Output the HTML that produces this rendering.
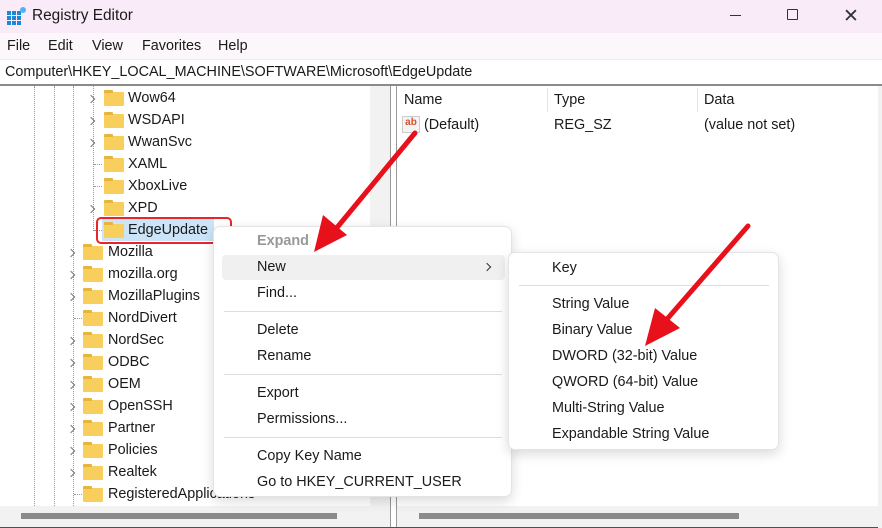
<!DOCTYPE html>
<html><head><style>
*{margin:0;padding:0;box-sizing:border-box}
body{width:882px;height:528px;overflow:hidden;background:#fff;font-family:"Liberation Sans",sans-serif;font-size:14.4px;color:#1a1a1a;position:relative}
.a{position:absolute;white-space:nowrap}
.f{position:absolute;width:20px;height:14px;background:#f8cf5c;border-radius:1px}
.f:before{content:"";position:absolute;left:0;top:-2px;width:9px;height:3px;background:#e7b43c;border-radius:1px 1px 0 0}
.ch{position:absolute;width:6px;height:6px;border-right:1.3px solid #777;border-top:1.3px solid #777;transform:rotate(45deg)}
.dl{position:absolute;border-left:1px dotted #999}
.dh{position:absolute;border-top:1px dotted #999}
.sep{position:absolute;height:1px;background:#ddd}
</style></head><body>
<div class="a" style="left:0;top:0;width:882px;height:33px;background:#f9ecf8"></div>
<svg class="a" style="left:7px;top:6px" width="20" height="20"><g fill="#1e88d8"><rect x="0" y="5" width="4" height="4"/><rect x="5" y="5" width="4" height="4"/><rect x="0" y="10" width="4" height="4"/><rect x="5" y="10" width="4" height="4"/><rect x="10" y="10" width="4" height="4"/><rect x="0" y="15" width="4" height="4"/><rect x="5" y="15" width="4" height="4"/><rect x="10" y="15" width="4" height="4"/><rect x="10" y="5" width="4" height="4"/></g><circle cx="16" cy="4" r="3" fill="#4fb3f0"/></svg>
<div class="a" style="left:32px;top:7px;font-size:15.4px">Registry Editor</div>
<div class="a" style="left:730px;top:15px;width:11px;height:1px;background:#333"></div>
<div class="a" style="left:787px;top:9px;width:11px;height:11px;border:1.3px solid #333;border-radius:1px"></div>
<div class="a" style="left:843px;top:5px;font-size:19px;color:#333">✕</div>
<div class="a" style="left:0;top:33px;width:882px;height:27px;background:#fbf7fb"></div>
<div class="a" style="left:7px;top:38px">File</div><div class="a" style="left:48px;top:38px">Edit</div><div class="a" style="left:92px;top:38px">View</div><div class="a" style="left:142px;top:38px">Favorites</div><div class="a" style="left:218px;top:38px">Help</div>
<div class="a" style="left:0;top:59px;width:882px;height:1px;background:#eee"></div>
<div class="a" style="left:5px;top:64px">Computer\HKEY_LOCAL_MACHINE\SOFTWARE\Microsoft\EdgeUpdate</div>
<div class="a" style="left:0;top:84px;width:882px;height:2px;background:#8a8a8a"></div>
<div class="a" style="left:370px;top:86px;width:20px;height:420px;background:#f2f2f2"></div>
<div class="a" style="left:390px;top:86px;width:1px;height:442px;background:#999"></div>
<div class="a" style="left:396px;top:86px;width:1px;height:442px;background:#999"></div>
<div class="dl" style="left:34px;top:86px;height:420px"></div>
<div class="dl" style="left:54px;top:86px;height:420px"></div>
<div class="dl" style="left:73px;top:86px;height:420px"></div>
<div class="dl" style="left:93px;top:86px;height:145px"></div>
<div class="dh" style="left:94px;top:164px;width:8px"></div><div class="dh" style="left:94px;top:186px;width:8px"></div><div class="dh" style="left:94px;top:230px;width:8px"></div>
<div class="dh" style="left:74px;top:318px;width:8px"></div><div class="dh" style="left:74px;top:494px;width:8px"></div>
<div class="ch" style="left:88px;top:96px"></div><div class="f" style="left:104px;top:92px"></div><div class="a" style="left:128px;top:90px">Wow64</div>
<div class="ch" style="left:88px;top:118px"></div><div class="f" style="left:104px;top:114px"></div><div class="a" style="left:128px;top:112px">WSDAPI</div>
<div class="ch" style="left:88px;top:140px"></div><div class="f" style="left:104px;top:136px"></div><div class="a" style="left:128px;top:134px">WwanSvc</div>
<div class="f" style="left:104px;top:158px"></div><div class="a" style="left:128px;top:156px">XAML</div>
<div class="f" style="left:104px;top:180px"></div><div class="a" style="left:128px;top:178px">XboxLive</div>
<div class="ch" style="left:88px;top:206px"></div><div class="f" style="left:104px;top:202px"></div><div class="a" style="left:128px;top:200px">XPD</div>
<div class="a" style="left:102px;top:219px;width:112px;height:22px;background:#cce4f7"></div>
<div class="a" style="left:96px;top:217px;width:136px;height:27px;border:2px solid #e8262a;border-radius:5px"></div>
<div class="f" style="left:104px;top:224px"></div><div class="a" style="left:128px;top:222px">EdgeUpdate</div>
<div class="ch" style="left:68px;top:250px"></div><div class="f" style="left:83px;top:246px"></div><div class="a" style="left:108px;top:244px">Mozilla</div>
<div class="ch" style="left:68px;top:272px"></div><div class="f" style="left:83px;top:268px"></div><div class="a" style="left:108px;top:266px">mozilla.org</div>
<div class="ch" style="left:68px;top:294px"></div><div class="f" style="left:83px;top:290px"></div><div class="a" style="left:108px;top:288px">MozillaPlugins</div>
<div class="f" style="left:83px;top:312px"></div><div class="a" style="left:108px;top:310px">NordDivert</div>
<div class="ch" style="left:68px;top:338px"></div><div class="f" style="left:83px;top:334px"></div><div class="a" style="left:108px;top:332px">NordSec</div>
<div class="ch" style="left:68px;top:360px"></div><div class="f" style="left:83px;top:356px"></div><div class="a" style="left:108px;top:354px">ODBC</div>
<div class="ch" style="left:68px;top:382px"></div><div class="f" style="left:83px;top:378px"></div><div class="a" style="left:108px;top:376px">OEM</div>
<div class="ch" style="left:68px;top:404px"></div><div class="f" style="left:83px;top:400px"></div><div class="a" style="left:108px;top:398px">OpenSSH</div>
<div class="ch" style="left:68px;top:426px"></div><div class="f" style="left:83px;top:422px"></div><div class="a" style="left:108px;top:420px">Partner</div>
<div class="ch" style="left:68px;top:448px"></div><div class="f" style="left:83px;top:444px"></div><div class="a" style="left:108px;top:442px">Policies</div>
<div class="ch" style="left:68px;top:470px"></div><div class="f" style="left:83px;top:466px"></div><div class="a" style="left:108px;top:464px">Realtek</div>
<div class="f" style="left:83px;top:488px"></div><div class="a" style="left:108px;top:486px">RegisteredApplications</div>
<div class="a" style="left:0;top:506px;width:390px;height:21px;background:#f2f2f2"></div>
<div class="a" style="left:397px;top:506px;width:485px;height:21px;background:#f2f2f2"></div>
<div class="a" style="left:21px;top:513px;width:316px;height:6px;background:#8a8a8a"></div>
<div class="a" style="left:419px;top:513px;width:320px;height:6px;background:#8a8a8a"></div>
<div class="a" style="left:0;top:527px;width:882px;height:1px;background:#6d3b6d"></div>
<div class="a" style="left:878px;top:86px;width:4px;height:442px;background:#f2f2f2"></div>
<div class="a" style="left:404px;top:92px">Name</div><div class="a" style="left:554px;top:92px">Type</div><div class="a" style="left:704px;top:92px">Data</div>
<div class="a" style="left:547px;top:88px;width:1px;height:24px;background:#e5e5e5"></div>
<div class="a" style="left:697px;top:88px;width:1px;height:24px;background:#e5e5e5"></div>
<div class="a" style="left:402px;top:116px;width:18px;height:17px;background:#f4f4f4;border:1px solid #ccc;font-size:10px;font-weight:bold;color:#d8502a;text-align:center;line-height:12px">ab</div>
<div class="a" style="left:424px;top:117px">(Default)</div><div class="a" style="left:554px;top:117px">REG_SZ</div><div class="a" style="left:704px;top:117px">(value not set)</div>
<div class="a" style="left:213px;top:226px;width:299px;height:271px;background:#fff;border:1px solid #e4e4e4;border-radius:7px;box-shadow:0 4px 12px rgba(0,0,0,.15)"></div>
<div class="a" style="left:222px;top:255px;width:283px;height:25px;background:#f0f0f0;border-radius:4px"></div>
<div class="a" style="left:257px;top:233px;color:#999;font-weight:bold">Expand</div>
<div class="a" style="left:257px;top:259px">New</div>
<div class="ch" style="left:484px;top:264px;border-color:#333"></div>
<div class="a" style="left:257px;top:285px">Find...</div>
<div class="sep" style="left:224px;top:311px;width:278px"></div>
<div class="a" style="left:257px;top:322px">Delete</div>
<div class="a" style="left:257px;top:348px">Rename</div>
<div class="sep" style="left:224px;top:374px;width:278px"></div>
<div class="a" style="left:257px;top:385px">Export</div>
<div class="a" style="left:257px;top:411px">Permissions...</div>
<div class="sep" style="left:224px;top:437px;width:278px"></div>
<div class="a" style="left:257px;top:448px">Copy Key Name</div>
<div class="a" style="left:257px;top:474px">Go to HKEY_CURRENT_USER</div>
<div class="a" style="left:508px;top:252px;width:271px;height:198px;background:#fff;border:1px solid #e4e4e4;border-radius:7px;box-shadow:0 4px 12px rgba(0,0,0,.15)"></div>
<div class="a" style="left:552px;top:260px">Key</div>
<div class="sep" style="left:519px;top:285px;width:250px"></div>
<div class="a" style="left:552px;top:296px">String Value</div>
<div class="a" style="left:552px;top:322px">Binary Value</div>
<div class="a" style="left:552px;top:348px">DWORD (32-bit) Value</div>
<div class="a" style="left:552px;top:374px">QWORD (64-bit) Value</div>
<div class="a" style="left:552px;top:400px">Multi-String Value</div>
<div class="a" style="left:552px;top:426px">Expandable String Value</div>
<svg class="a" style="left:0;top:0" width="882" height="528">
<line x1="415" y1="133" x2="335" y2="230" stroke="#e8101a" stroke-width="5" stroke-linecap="round"/>
<polygon points="314,252 323,215 347,235" fill="#e8101a"/>
<line x1="748" y1="226" x2="668" y2="318" stroke="#e8101a" stroke-width="5" stroke-linecap="round"/>
<polygon points="645,346 655,308 680,328" fill="#e8101a"/>
</svg>
</body></html>
